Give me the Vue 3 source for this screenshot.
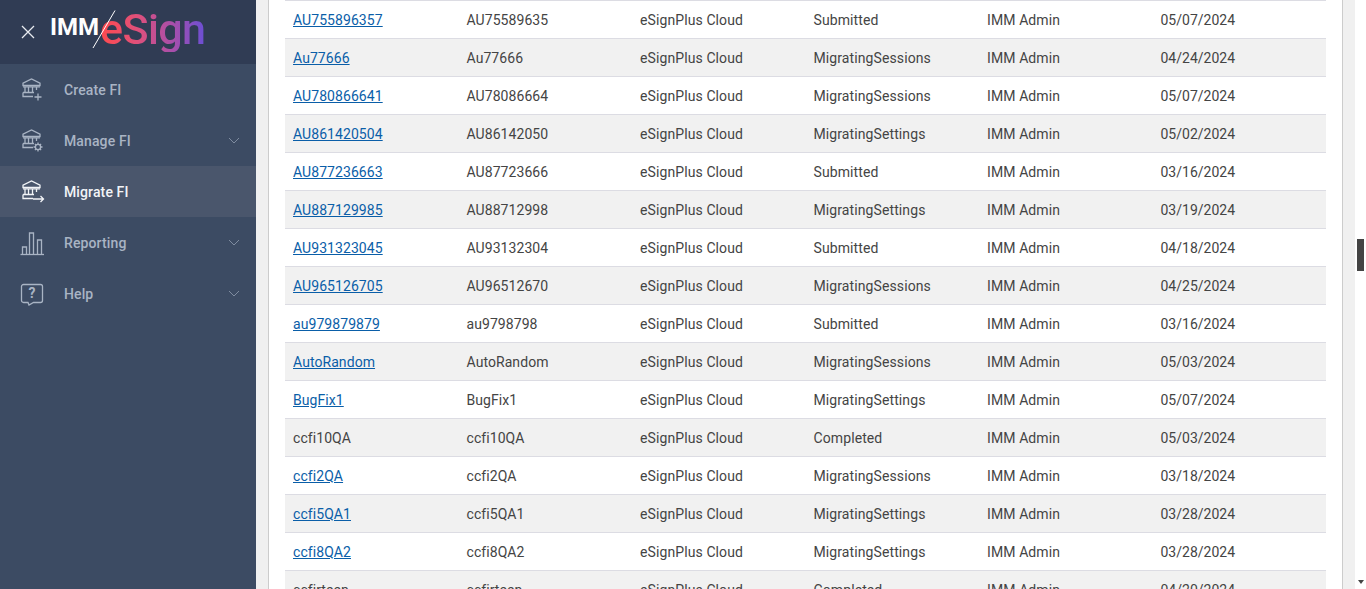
<template>
  <div class="page">
    <aside class="sidebar">
      <header class="brand">
        <svg class="close" width="14" height="14" viewBox="0 0 14 14">
          <path d="M1 1l12 12M13 1L1 13" fill="none" stroke="#e8ebf0" stroke-width="1.3" />
        </svg>
        <div class="logo">
          <span class="imm">IMM</span>
          <svg class="slash" width="24" height="40" viewBox="0 0 24 40">
            <path d="M23 0.5L1 38" stroke="#fff" stroke-width="1" fill="none" />
          </svg>
          <span class="esign">eSign</span>
        </div>
      </header>
      <nav>
        <a v-for="item in menu" :key="item.label" class="nav-item" :class="{ active: item.active }">
          <svg class="nav-icon" width="24" height="25" viewBox="0 0 24 25" fill="none" stroke="currentColor" stroke-width="1.3">
            <template v-if="item.icon !== 'chart' && item.icon !== 'help'">
              <path d="M3 8.5V6.2L11.5 2 20 6.2v2.3H3z" />
              <path d="M5 10v5M8.5 10v5M12.5 10v5M16.5 10v3M3 9.8h17" />
              <path d="M3 15.5h11M3 15.5v4h10" />
            </template>
            <path v-if="item.icon === 'plus'" d="M18 16.5v7M14.5 20h7" />
            <g v-if="item.icon === 'gear'">
              <circle cx="18" cy="19" r="2.6" />
              <path d="M18 14.5v2M18 21.5v2M13.5 19h2M20.5 19h2M14.9 15.9l1.3 1.3M19.8 20.8l1.3 1.3M21.1 15.9l-1.3 1.3M16.2 20.8l-1.3 1.3" />
            </g>
            <path v-if="item.icon === 'arrow'" d="M13 20h10.5M20.5 17l3 3-3 3" />
            <g v-if="item.icon === 'chart'">
              <path d="M0.5 24.5h23.5" />
              <path d="M2.5 24v-7h4v7M9.5 24V3h4v21M17.5 24V10h4v14" />
            </g>
            <g v-if="item.icon === 'help'">
              <path d="M3.5 3.5h17a2 2 0 0 1 2 2v14a2 2 0 0 1-2 2h-7l-4.5 2.5-1-2.5H3.500a2 2 0 0 1-2-2V5.500a2 2 0 0 1 2-2z" />
              <text x="12" y="17" text-anchor="middle" class="help-mark">?</text>
            </g>
          </svg>
          <span class="nav-label">{{ item.label }}</span>
          <svg v-if="item.children" class="chev" width="12" height="7" viewBox="0 0 12 7">
            <path d="M1 1l5 5 5-5" fill="none" stroke="currentColor" stroke-width="1" />
          </svg>
        </a>
      </nav>
    </aside>

    <main class="content">
      <section class="panel">
        <table class="grid">
          <tbody>
            <tr v-for="row in rows" :key="row[0]">
              <td>
                <a v-if="row[6] !== false" class="fi-link">{{ row[0] }}</a>
                <template v-else>{{ row[0] }}</template>
              </td>
              <td v-for="n in 5" :key="n">{{ row[n] }}</td>
            </tr>
          </tbody>
        </table>
      </section>
    </main>

    <div class="scrollbar">
      <div class="thumb"></div>
      <div class="arrow"></div>
    </div>
  </div>
</template>

<script setup>
const menu = [
  { label: 'Create FI', icon: 'plus' },
  { label: 'Manage FI', icon: 'gear', children: true },
  { label: 'Migrate FI', icon: 'arrow', active: true },
  { label: 'Reporting', icon: 'chart', children: true },
  { label: 'Help', icon: 'help', children: true },
]

const cloud = 'eSignPlus Cloud'
const admin = 'IMM Admin'
const rows = [
  ['AU755896357', 'AU75589635', cloud, 'Submitted', admin, '05/07/2024'],
  ['Au77666', 'Au77666', cloud, 'MigratingSessions', admin, '04/24/2024'],
  ['AU780866641', 'AU78086664', cloud, 'MigratingSessions', admin, '05/07/2024'],
  ['AU861420504', 'AU86142050', cloud, 'MigratingSettings', admin, '05/02/2024'],
  ['AU877236663', 'AU87723666', cloud, 'Submitted', admin, '03/16/2024'],
  ['AU887129985', 'AU88712998', cloud, 'MigratingSettings', admin, '03/19/2024'],
  ['AU931323045', 'AU93132304', cloud, 'Submitted', admin, '04/18/2024'],
  ['AU965126705', 'AU96512670', cloud, 'MigratingSessions', admin, '04/25/2024'],
  ['au979879879', 'au9798798', cloud, 'Submitted', admin, '03/16/2024'],
  ['AutoRandom', 'AutoRandom', cloud, 'MigratingSessions', admin, '05/03/2024'],
  ['BugFix1', 'BugFix1', cloud, 'MigratingSettings', admin, '05/07/2024'],
  ['ccfi10QA', 'ccfi10QA', cloud, 'Completed', admin, '05/03/2024', false],
  ['ccfi2QA', 'ccfi2QA', cloud, 'MigratingSessions', admin, '03/18/2024'],
  ['ccfi5QA1', 'ccfi5QA1', cloud, 'MigratingSettings', admin, '03/28/2024'],
  ['ccfi8QA2', 'ccfi8QA2', cloud, 'MigratingSettings', admin, '03/28/2024'],
  ['ccfirteen', 'ccfirteen', cloud, 'Completed', admin, '04/20/2024', false],
]
</script>

<style>
html,
body {
  margin: 0;
  overflow: hidden;
  background: #fff;
}
</style>

<style scoped>
.page {
  display: flex;
  height: 589px;
  overflow: hidden;
  font-family: Roboto, "Liberation Sans", sans-serif;
  font-size: 14px;
  color: #444;
}

.sidebar {
  width: 256px;
  flex: none;
  background: #3c4b63;
}

.brand {
  display: flex;
  align-items: center;
  height: 64px;
  padding-left: 21px;
  box-sizing: border-box;
  background: #303c54;
}

.close {
  flex: none;
}

.logo {
  position: relative;
  display: flex;
  align-items: baseline;
  margin-left: 15px;
  margin-top: -6px;
  height: 46px;
}

.imm {
  color: #fff;
  font-size: 24px;
  font-weight: 700;
  line-height: 46px;
  transform: translateY(-9px);
}

.slash {
  position: absolute;
  left: 42px;
  top: 4px;
}

.esign {
  margin-left: 1px;
  font-size: 43px;
  font-weight: 500;
  line-height: 46px;
  letter-spacing: -0.6px;
  background: linear-gradient(90deg, #ff4a4d 0%, #e0507a 35%, #a64fac 70%, #6b4fd4 100%);
  -webkit-background-clip: text;
  background-clip: text;
  color: transparent;
}

.nav-item {
  display: flex;
  align-items: center;
  height: 51px;
  padding: 0 16px 0 20px;
  color: #a9b4c4;
}

.nav-item.active {
  background: #4a566c;
  color: #f2f4f7;
}

.nav-icon {
  flex: none;
  overflow: visible;
}

.help-mark {
  font-family: Roboto, sans-serif;
  font-size: 14px;
  font-weight: 700;
  fill: currentColor;
  stroke: none;
}

.nav-label {
  flex: 1;
  margin-left: 20px;
  font-weight: 500;
  letter-spacing: 0.12px;
}

.chev {
  flex: none;
  color: #7f8ca0;
}

.content {
  flex: 1;
  min-width: 0;
  padding: 0 12px;
  background: #f0f0f0;
}

.panel {
  height: 100%;
  padding: 0 16px;
  box-sizing: border-box;
  background: #fff;
  border-left: 1px solid #ccc;
  border-right: 1px solid #ccc;
}

.grid {
  width: 100%;
  table-layout: fixed;
  border-collapse: separate;
  border-spacing: 0;
}

.grid td {
  height: 38px;
  box-sizing: border-box;
  padding: 0 8px;
  border-top: 1px solid #dcdce3;
  white-space: nowrap;
  letter-spacing: 0.1px;
}

.grid td:nth-child(-n + 2) {
  letter-spacing: 0.07px;
}

.grid td:last-child {
  letter-spacing: 0;
}

.grid tr:nth-child(even) td {
  background: #f1f1f1;
}

.fi-link {
  color: #0a5ea8;
  text-decoration: underline;
}

.scrollbar {
  display: flex;
  flex-direction: column;
  justify-content: space-between;
  align-items: center;
  width: 11px;
  flex: none;
  background: #fff;
  padding: 239px 0 5px;
  box-sizing: border-box;
}

.thumb {
  width: 7px;
  height: 32px;
  background: #444;
}

.arrow {
  width: 0;
  height: 0;
  border-left: 3px solid transparent;
  border-right: 3px solid transparent;
  border-top: 4px solid #444;
}
</style>
